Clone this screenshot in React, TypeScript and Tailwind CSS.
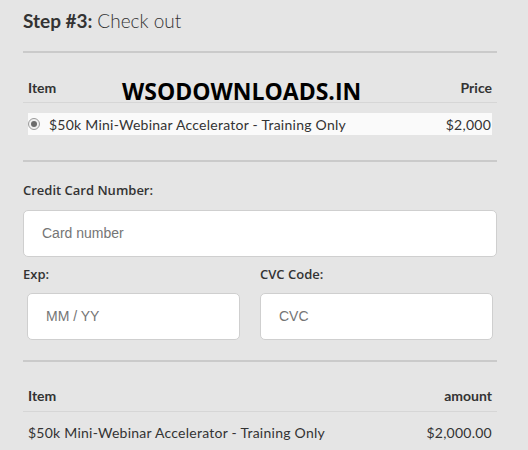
import React from "react";

const body = { fontFamily: "Lato, 'Open Sans', sans-serif" };
const sans = { fontFamily: "'Open Sans', sans-serif" };
const arial = { fontFamily: "'Liberation Sans', Arial, sans-serif" };

const Radio = () => (
  <span className="w-[12px] h-[12px] rounded-full border border-[#9a9a9a] bg-[#f0f0f0] flex items-center justify-center">
    <span className="w-[6px] h-[6px] rounded-full bg-[#6b6b6b]" />
  </span>
);

const Field = ({ placeholder, className }: { placeholder: string; className: string }) => (
  <div
    className={`h-[47px] bg-white border border-[#cfcfcf] rounded-[5px] flex items-center pl-[18px] text-[14px] text-[#757575] ${className}`}
    style={arial}
  >
    {placeholder}
  </div>
);

export default function App() {
  return (
    <div className="w-[528px] h-[450px] bg-[#e5e5e5] overflow-hidden text-[#333]" style={body}>
      <div className="ml-[23px] w-[474px]">
        <h2 className="pt-[8px] h-[51px] text-[19px] leading-[26px] text-[#333]">
          <span className="font-bold">Step #3:</span> <span className="font-light">Check out</span>
        </h2>
        <div className="h-[2px] bg-[#cacaca]" />

        {/* item selection */}
        <div className="relative h-[50px] flex items-end pb-[4px] px-[5px] justify-between border-b border-[#d6d6d6] text-[14px] font-bold">
          <span>Item</span>
          <span>Price</span>
          <span className="absolute left-[99px] top-[21px] text-[23px] font-bold text-black" style={sans}>
            WSODOWNLOADS.IN
          </span>
        </div>
        <div className="mt-[10px] mx-[5px] h-[22px] bg-[#fafafa] flex items-center justify-between text-[14px] tracking-[0.25px]">
          <div className="flex items-center gap-[9px]">
            <Radio />
            <span>$50k Mini-Webinar Accelerator - Training Only</span>
          </div>
          <span className="mr-[1px]">$2,000</span>
        </div>
        <div className="mt-[25px] h-[2px] bg-[#cacaca]" />

        {/* card fields */}
        <label className="block mt-[20px] text-[13px] font-semibold leading-[16px]" style={sans}>
          Credit Card Number:
        </label>
        <Field placeholder="Card number" className="mt-[12px]" />
        <div className="flex mt-[9px]">
          <div className="w-[237px]">
            <label className="block text-[13px] font-semibold leading-[16px]" style={sans}>
              Exp:
            </label>
            <Field placeholder="MM / YY" className="mt-[11px] ml-[4px] w-[213px]" />
          </div>
          <div>
            <label className="block text-[13px] font-semibold leading-[16px]" style={sans}>
              CVC Code:
            </label>
            <Field placeholder="CVC" className="mt-[11px] w-[233px]" />
          </div>
        </div>
        <div className="mt-[20px] h-[2px] bg-[#cacaca]" />

        {/* order summary */}
        <div className="h-[50px] flex items-end pb-[5px] px-[5px] justify-between border-b border-[#d6d6d6] text-[14px] font-bold">
          <span>Item</span>
          <span>amount</span>
        </div>
        <div className="h-[40px] px-[5px] flex items-center justify-between text-[14px] tracking-[0.25px]">
          <span>$50k Mini-Webinar Accelerator - Training Only</span>
          <span>$2,000.00</span>
        </div>
      </div>
    </div>
  );
}
